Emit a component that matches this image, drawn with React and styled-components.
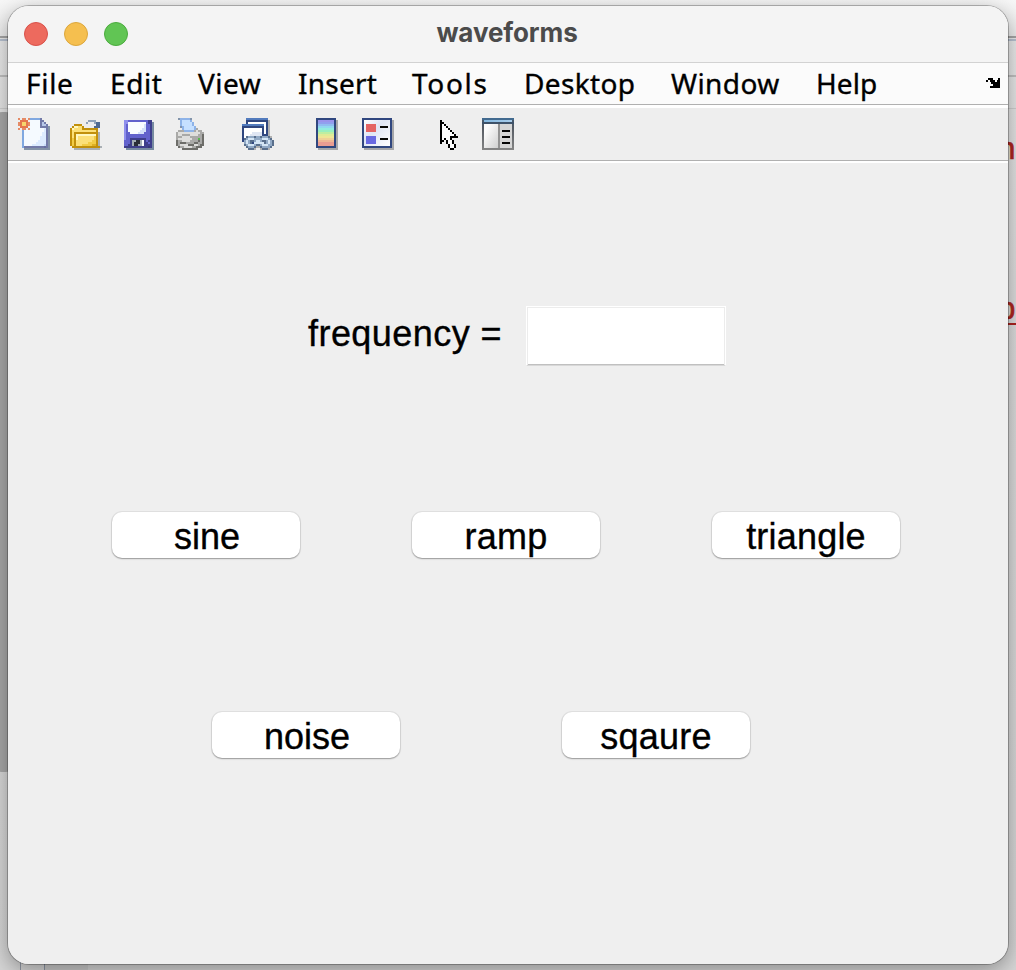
import React from "react";
import styled, { createGlobalStyle } from "styled-components";

const GlobalStyle = createGlobalStyle`
  * { box-sizing: border-box; }
  html, body { margin: 0; padding: 0; overflow: hidden; }
`;

const Desktop = styled.div`
  position: relative;
  width: 1016px;
  height: 970px;
  overflow: hidden;
  padding: 6px 8px 5px;
  background: linear-gradient(#f7f7f7 0, #ececec 37px, #e6e6e6 110px, #dedede 300px, #d6d6d6 100%);
`;

const BackRule = styled.div`
  position: absolute;
  left: 0;
  top: ${(p) => p.$y}px;
  width: 100%;
  height: ${(p) => p.$h || 1}px;
  background: ${(p) => p.$color};
`;

const BackThumb = styled.div`
  position: absolute;
  left: -6px;
  top: 112px;
  width: 20px;
  height: 660px;
  border-radius: 8px;
  background: #a9a9a9;
`;

const BackFooter = styled.div`
  position: absolute;
  left: 20px;
  top: 940px;
  width: 68px;
  height: 30px;
  border-left: 1px solid #9299a5;
  background: linear-gradient(90deg, transparent 23px, #8d96a5 23px, #8d96a5 24px, #cacaca 24px);
`;

const BackLetter = styled.span`
  position: absolute;
  left: ${(p) => p.$x}px;
  top: ${(p) => p.$y}px;
  font: 32px/36px "Liberation Mono", monospace;
  -webkit-text-stroke: 0.6px #ad2420;
  color: #ad2420;
`;

const BackUnderline = styled.div`
  position: absolute;
  left: 996px;
  top: 323px;
  width: 20px;
  height: 2px;
  background: #ad2420;
`;

const WindowFrame = styled.div`
  position: relative;
  border-radius: 21px;
  height: 958px;
  box-shadow: 0 0 0 1px rgba(0, 0, 0, 0.25), 0 6px 22px rgba(0, 0, 0, 0.36);
`;

const Window = styled.main`
  display: flex;
  flex-direction: column;
  width: 1000px;
  height: 958px;
  overflow: hidden;
  border-radius: 21px;
  background: #efefef;
`;

const TitleBar = styled.header`
  display: grid;
  grid-template-columns: 150px 1fr 150px;
  align-items: center;
  height: 57px;
  flex: none;
  background: #f4f4f4;
  border-bottom: 1px solid #d2d2d2;
`;

const Lights = styled.div`
  display: flex;
  gap: 16px;
  padding-left: 16px;
`;

const Light = styled.span`
  width: 24px;
  height: 24px;
  border-radius: 50%;
  background: ${(p) => p.$fill};
  border: 1px solid ${(p) => p.$edge};
`;

const Title = styled.h1`
  margin: 0;
  padding: 0 2px 2px 0;
  text-align: center;
  font: 700 26px/32px Inter, sans-serif;
  letter-spacing: -0.1px;
  color: #4b4b4b;
`;

const MenuBar = styled.nav`
  display: flex;
  align-items: center;
  height: 42px;
  flex: none;
  padding: 0 8px 2px 18px;
  background: #fbfbfb;
  border-bottom: 1px solid #b0b0b0;
`;

const MenuItem = styled.span`
  width: ${(p) => p.$width}px;
  font: 28px/38px "Noto Sans", sans-serif;
  -webkit-text-stroke: 0.35px #000;
  letter-spacing: ${(p) => p.$track}px;
  white-space: nowrap;
  color: #000;
`;

const DockIcon = styled.svg`
  margin-left: auto;
`;

const ToolBar = styled.div`
  display: flex;
  align-items: center;
  gap: 36px;
  height: 56px;
  flex: none;
  padding: 0 0 0 10px;
  background: #eeeeee;
  border-top: 3px solid #fff;
  border-bottom: 1px solid #b0b0b0;
`;

const ToolGroup = styled.div`
  display: flex;
  gap: 20px;
`;

const IconSvg = styled.svg`
  display: block;
  width: 32px;
  height: 32px;
`;

const Canvas = styled.section`
  flex: 1;
  border-top: 2px solid #fff;
  padding-top: 143px;
  font: 36px/46px "Liberation Sans", Arial, sans-serif;
  color: #000;
`;

const FieldRow = styled.label`
  display: flex;
  height: 60px;
  padding-left: 300px;
`;

const FieldLabel = styled.span`
  width: 218px;
  padding-top: 5px;
  letter-spacing: 0.45px;
  -webkit-text-stroke: 0.35px #000;
`;

const Field = styled.input`
  width: 200px;
  height: 60px;
  padding: 0 8px;
  border: 1px solid #fff;
  border-bottom-color: #d8d8d8;
  box-shadow: inset 0 1px #ececec, inset 1px 0 #ececec, inset -1px 0 #ececec, inset 0 -1px #c0c0c0;
  background: #fff;
  font: inherit;
  outline: none;
`;

const ButtonRow = styled.div`
  display: flex;
  gap: ${(p) => p.$gap}px;
  margin-top: ${(p) => p.$top}px;
  padding-left: ${(p) => p.$indent}px;
`;

const PushButton = styled.button`
  width: 188px;
  height: 46px;
  padding: 3px 0 0 ${(p) => p.$nudge || 0}px;
  border: 0;
  border-radius: 10px;
  background: #fff;
  box-shadow: 0 0 0 1px rgba(0, 0, 0, 0.06), 0 1px 1.5px rgba(0, 0, 0, 0.32);
  font: 36px/43px "Liberation Sans", Arial, sans-serif;
  -webkit-text-stroke: 0.35px #000;
  letter-spacing: ${(p) => p.$track || 0}px;
  color: #000;
`;

/* Draws a bitmap icon: one character per cell, "." is empty. */
function Bitmap({ rows, palette }) {
  const cells = [];
  rows.forEach((row, y) => {
    let x = 0;
    while (x < row.length) {
      const key = row[x];
      let end = x + 1;
      while (end < row.length && row[end] === key) end += 1;
      if (palette[key]) {
        cells.push(<rect key={`${x}-${y}`} x={x} y={y} width={end - x} height="1" fill={palette[key]} />);
      }
      x = end;
    }
  });
  return <g shapeRendering="crispEdges">{cells}</g>;
}

function Icon({ children, label }) {
  return (
    <IconSvg viewBox="0 0 16 16" role="img" aria-label={label}>
      {children}
    </IconSvg>
  );
}

const newRows = [
  "a.aa.abbbbbp....",
  ".oooo.wwwwwpp...",
  "aoyyoawwwwwplp..",
  "aoyyoawwwwwpllp.",
  ".oooo.wwwwwpppps",
  "a.aa.awwwwwwwcps",
  "..bwwwwwwwwwwcps",
  "..bwwwwwwwwwccps",
  "..bwwwwwwwwwccps",
  "..bwwwwwwwwcccps",
  "..bwwwwwwwwcccps",
  "..bwwwwwwwccccps",
  "..bwwwwwwcccccps",
  "..bwwwwccccccCps",
  "..bppppppppppPps",
  "...sssssssssssss",
];
const newPalette = { a: "#e58b66", o: "#e4764e", y: "#f7d56d", b: "#80a8e0", w: "#f5faff", c: "#dcebff", C: "#c8dcfa", p: "#727aa8", P: "#6670a0", l: "#b7c8e9", s: "#8393a7" };

const openRows = [
  "................",
  ".........bbbb...",
  "........b...bdd.",
  "..oooo.......dd.",
  ".owwyyo.....ddd.",
  "owyyyyoooooooo..",
  "oyyyyyyyyyyyyo..",
  "oyoooooooooooos.",
  "oyowwwwwwwwwwos.",
  "oyowyyyyyyyygos.",
  "ogowyyyyyyyygos.",
  "ogoyyyyyyyyggos.",
  "ogoyyyyyyggggos.",
  "ogoyyygggggGGos.",
  ".oooooooooooooos",
  "..sssssssssssss.",
];
const openPalette = { o: "#c1900c", y: "#fce078", w: "#fff7bf", g: "#f2cc45", G: "#dfb124", b: "#91a3b9", d: "#506a91", s: "#aab0b5" };

const saveRows = [
  "................",
  ".llmmmmmmmmmmdd.",
  ".llwwwwwwwwwmdds",
  ".lmwwwwwwwwcmmds",
  ".lmwwwwwwwwcmmds",
  ".lmwwwwwwwccmmds",
  ".lmwwwwwwcccmmds",
  ".lmmwwwwcccmmmds",
  ".lmmmmmmmmmmmmds",
  ".lmmmmmmmmmmmmds",
  ".lmmddddddddmmds",
  ".mmmdggkkgwdmdds",
  ".mmmdgkkkgwddmds",
  ".mmddgkkggwdddds",
  ".ddddddddddddDds",
  "..ssssssssssssss",
];
const savePalette = { l: "#8f8fec", m: "#6262cc", d: "#3e3e8b", D: "#373777", w: "#fafcff", c: "#d5e1fa", g: "#a2acb5", k: "#292d37", s: "#778ba0" };

const printRows = [
  "..nbbbbbn.......",
  "...bccccb.......",
  "...bcccccb......",
  "...bcccccb......",
  "...nbcccccb.....",
  "....bcccccbg....",
  "..gggbbbbbgwgg..",
  ".gwwwwwwwwwwwgg.",
  ".gwwggggwwwwggk.",
  ".gggwwwwggggggk.",
  ".gwwwwwwwgggGgk.",
  ".kggwwwwggggkgk.",
  ".kgkkkggggkkggk.",
  ".kgwwwwkkkwwgkk.",
  "..kggwwwwggkkk..",
  "....kkkkkkkk....",
];
const printPalette = { n: "#8294ab", b: "#8eb3e8", c: "#c6e0ff", g: "#a9a9a7", w: "#dededc", k: "#6d6d69", G: "#59b64f" };

const linkRows = [
  "..bbbbbbbbbbb...",
  "..nnnnnnnnnnns..",
  "..nwwwwwwwwwns..",
  "bbbbbbbbbbbwns..",
  "nnnnnnnnnnnwns..",
  "nwwwwwwwwwnwns..",
  "nwwwwwwwwwnwns..",
  "nwwwwcccccnwns..",
  "nwwwccccccnnns..",
  "nwkxxxkxxkxxxks.",
  "nkxlllxxxxlllxk.",
  "nxlxkkxllxkkxlxk",
  ".xlxknlllllkxlxk",
  ".kxlllxkkxlllxxk",
  "..kxxxksskxxxxk.",
  "...kkks..skkks..",
];
const linkPalette = { b: "#527bbd", n: "#30477f", w: "#fff", c: "#dfe6f3", s: "#b1b1b1", k: "#596f8c", x: "#91a9c5", l: "#d5e6f5" };

const cursorRows = [
  "................",
  ".....k..........",
  ".....kk.........",
  ".....kwk........",
  ".....kwwk.......",
  ".....kwwwk......",
  ".....kwwwwk.....",
  ".....kwwwwwk....",
  ".....kwwwwwwk...",
  ".....kwwwwkkkk..",
  ".....kwkwwk.....",
  ".....kk.kwwk....",
  ".....k..kwwk....",
  ".........kwwk...",
  ".........kwwk...",
  "..........kk....",
];

const dockRows = [
  ".kkk...k",
  "k.kkk.kk",
  "...kkkkk",
  "....kkkk",
  "..kkkkkk",
];

function ColorbarIcon() {
  const bands = ["#9a94ec", "#919fee", "#91bdf0", "#90d8ef", "#91ecdf", "#99efbd", "#bdeea1", "#dfeb96", "#eee696", "#efd196", "#efb795", "#ea9d92", "#ea9d92"];
  return (
    <Icon label="Insert colorbar">
      <g shapeRendering="crispEdges">
        <rect x="4" y="1" width="10" height="15" fill="#a6a7a9" />
        <rect x="3" y="0" width="10" height="15" fill="#30477f" />
        {bands.map((c, i) => <rect key={i} x="4" y={1 + i} width="8" height="1" fill={c} />)}
      </g>
    </Icon>
  );
}

function LegendIcon() {
  return (
    <Icon label="Insert legend">
      <defs>
        <linearGradient id="legendFill" x1="0" y1="0" x2="1" y2="1">
          <stop offset="0" stopColor="#fff" />
          <stop offset=".4" stopColor="#dfe5f5" />
          <stop offset="1" stopColor="#fff" />
        </linearGradient>
      </defs>
      <g shapeRendering="crispEdges">
        <path d="M1 1h15v15H1z" fill="#a6a7a9" />
        <path d="M0 0h15v15H0z" fill="#30477f" />
        <path d="M1 1h13v13H1z" fill="url(#legendFill)" />
        <path d="M2 3h5v4H2z" fill="#e46464" />
        <path d="M2 9h5v4H2z" fill="#6969e2" />
        <path d="M9 4h4v1H9zM9 10h4v1H9z" fill="#080808" />
      </g>
    </Icon>
  );
}

function InspectorIcon() {
  return (
    <Icon label="Open property inspector">
      <defs>
        <linearGradient id="paneFill" x1="0" y1="0" x2="1" y2="1">
          <stop offset=".2" stopColor="#fcfcfc" />
          <stop offset="1" stopColor="#d0d0d0" />
        </linearGradient>
        <linearGradient id="frameFill" x1="0" y1="0" x2="0" y2="1">
          <stop offset="0" stopColor="#42586e" />
          <stop offset=".3" stopColor="#555b63" />
          <stop offset="1" stopColor="#858585" />
        </linearGradient>
        <linearGradient id="barFill">
          <stop stopColor="#82b7df" />
          <stop offset="1" stopColor="#a9cdeb" />
        </linearGradient>
      </defs>
      <g shapeRendering="crispEdges">
        <path d="M0 0h16v16H0z" fill="url(#frameFill)" />
        <path d="M0 0h16v1H0z" fill="#426a8f" />
        <path d="M1 1h14v1H1z" fill="url(#barFill)" />
        <path d="M0 2h16v1H0z" fill="#3e5269" />
        <path d="M1 3h7v12H1z" fill="url(#paneFill)" />
        <path d="M8 3h1v12H8z" fill="#929292" />
        <path d="M9 3h6v12H9z" fill="#d6d6d6" />
        <path d="M10 6h4v1h-4zM10 9h4v1h-4zM10 12h4v1h-4z" fill="#050505" />
      </g>
    </Icon>
  );
}

const menus = [
  ["File", 84, 0.7],
  ["Edit", 88, 0.6],
  ["View", 100, 0.5],
  ["Insert", 114, 0.25],
  ["Tools", 112, 1.7],
  ["Desktop", 147, 0.35],
  ["Window", 145, 0.4],
  ["Help", 70, 0.1],
];

export default function App() {
  return (
    <>
      <GlobalStyle />
      <Desktop>
        <BackRule $y={36} $color="#a5a5a5" $h={2} />
        <BackRule $y={39} $color="#b8c2d1" $h={2} />
        <BackRule $y={75} $color="#c1c1c1" $h={2} />
        <BackRule $y={108} $color="#d0d0d0" />
        <BackThumb />
        <BackFooter />
        <BackLetter $x={997} $y={133}>n</BackLetter>
        <BackLetter $x={997} $y={293}>p</BackLetter>
        <BackUnderline />
        <WindowFrame>
          <Window>
            <TitleBar>
              <Lights>
                <Light $fill="#ed6a5e" $edge="#d8514a" />
                <Light $fill="#f5bf4f" $edge="#dba63c" />
                <Light $fill="#61c554" $edge="#4bab3e" />
              </Lights>
              <Title>waveforms</Title>
            </TitleBar>
            <MenuBar>
              {menus.map(([name, width, track]) => (
                <MenuItem key={name} $width={width} $track={track}>{name}</MenuItem>
              ))}
              <DockIcon width="14" height="10" viewBox="0 0 8 5" preserveAspectRatio="none" aria-label="Dock">
                <Bitmap rows={dockRows} palette={{ k: "#000" }} />
              </DockIcon>
            </MenuBar>
            <ToolBar>
              <ToolGroup>
                <Icon label="New figure"><Bitmap rows={newRows} palette={newPalette} /></Icon>
                <Icon label="Open file"><Bitmap rows={openRows} palette={openPalette} /></Icon>
                <Icon label="Save figure"><Bitmap rows={saveRows} palette={savePalette} /></Icon>
                <Icon label="Print figure"><Bitmap rows={printRows} palette={printPalette} /></Icon>
              </ToolGroup>
              <ToolGroup>
                <Icon label="Link plot"><Bitmap rows={linkRows} palette={linkPalette} /></Icon>
              </ToolGroup>
              <ToolGroup>
                <ColorbarIcon />
                <LegendIcon />
              </ToolGroup>
              <ToolGroup>
                <Icon label="Edit plot"><Bitmap rows={cursorRows} palette={{ k: "#000", w: "#fff" }} /></Icon>
                <InspectorIcon />
              </ToolGroup>
            </ToolBar>
            <Canvas>
              <FieldRow>
                <FieldLabel>frequency =</FieldLabel>
                <Field aria-label="frequency" />
              </FieldRow>
              <ButtonRow $top={146} $indent={104} $gap={112}>
                <PushButton $nudge={2}>sine</PushButton>
                <PushButton $track={0.2}>ramp</PushButton>
                <PushButton $track={0.2}>triangle</PushButton>
              </ButtonRow>
              <ButtonRow $top={154} $indent={204} $gap={162}>
                <PushButton $nudge={2}>noise</PushButton>
                <PushButton $track={0.2}>sqaure</PushButton>
              </ButtonRow>
            </Canvas>
          </Window>
        </WindowFrame>
      </Desktop>
    </>
  );
}
